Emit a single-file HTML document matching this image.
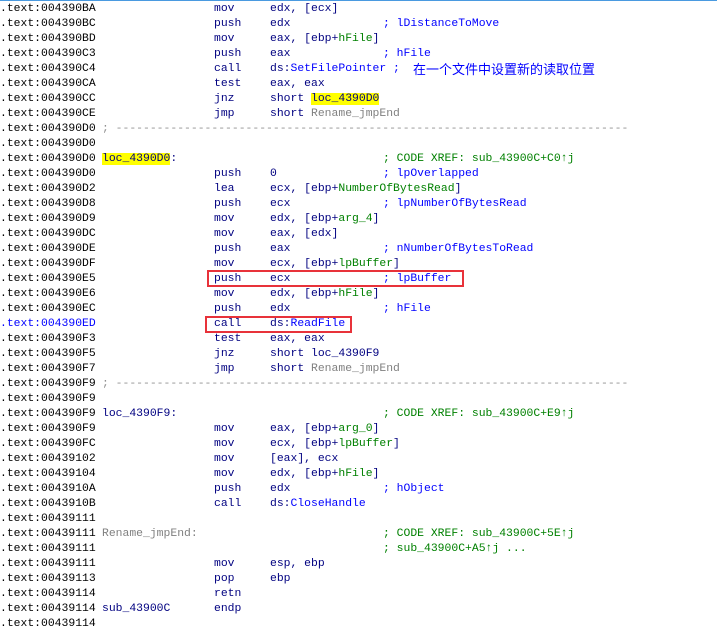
<!DOCTYPE html>
<html><head><meta charset="utf-8"><style>
html,body{margin:0;padding:0;background:#fff;width:717px;height:630px;overflow:hidden;position:relative}
body{font-family:"Liberation Mono",monospace;font-size:11.4px;color:#000080}
.top{position:absolute;left:0;top:0;width:717px;height:1px;background:#4a9ae0}
.l{position:absolute;left:0;height:15px;line-height:15px;width:717px;white-space:pre;margin-top:1px}
.l span{position:absolute;top:0}
.l span span{position:static}
.a{left:0;color:#000}
.b{color:#0000ff}
.lb{left:102px;color:#000080}
.m{left:214px}
.o{left:270px}
.c{left:383px;color:#0000ff}
.g{color:#008000}
.x{left:383px;color:#008000}
.gr{color:#808080}
.y{background:#ffff00}
.sep{left:102px;color:#909090}
.box{position:absolute;border:2px solid #e8323a;box-sizing:border-box}
.l span.cj{left:413px;top:-1px;font-family:"Noto Sans CJK SC",sans-serif;font-size:13px;line-height:15px;color:#0000ff}
</style></head><body>
<div class="top"></div>
<div class="l" style="top:1px"><span class="a">.text:004390BA</span><span class="m">mov</span><span class="o">edx, [ecx]</span></div>
<div class="l" style="top:16px"><span class="a">.text:004390BC</span><span class="m">push</span><span class="o">edx</span><span class="c">; lDistanceToMove</span></div>
<div class="l" style="top:31px"><span class="a">.text:004390BD</span><span class="m">mov</span><span class="o">eax, [ebp+<span class="g">hFile</span>]</span></div>
<div class="l" style="top:46px"><span class="a">.text:004390C3</span><span class="m">push</span><span class="o">eax</span><span class="c">; hFile</span></div>
<div class="l" style="top:61px"><span class="a">.text:004390C4</span><span class="m">call</span><span class="o">ds:<span class="b">SetFilePointer ;</span></span><span class="cj">在一个文件中设置新的读取位置</span></div>
<div class="l" style="top:76px"><span class="a">.text:004390CA</span><span class="m">test</span><span class="o">eax, eax</span></div>
<div class="l" style="top:91px"><span class="a">.text:004390CC</span><span class="m">jnz</span><span class="o">short <span class="y">loc_4390D0</span></span></div>
<div class="l" style="top:106px"><span class="a">.text:004390CE</span><span class="m">jmp</span><span class="o">short <span class="gr">Rename_jmpEnd</span></span></div>
<div class="l" style="top:121px"><span class="a">.text:004390D0</span><span class="sep">; ---------------------------------------------------------------------------</span></div>
<div class="l" style="top:136px"><span class="a">.text:004390D0</span></div>
<div class="l" style="top:151px"><span class="a">.text:004390D0</span><span class="lb"><span class="y">loc_4390D0</span>:</span><span class="x">; CODE XREF: sub_43900C+C0&#8593;j</span></div>
<div class="l" style="top:166px"><span class="a">.text:004390D0</span><span class="m">push</span><span class="o">0</span><span class="c">; lpOverlapped</span></div>
<div class="l" style="top:181px"><span class="a">.text:004390D2</span><span class="m">lea</span><span class="o">ecx, [ebp+<span class="g">NumberOfBytesRead</span>]</span></div>
<div class="l" style="top:196px"><span class="a">.text:004390D8</span><span class="m">push</span><span class="o">ecx</span><span class="c">; lpNumberOfBytesRead</span></div>
<div class="l" style="top:211px"><span class="a">.text:004390D9</span><span class="m">mov</span><span class="o">edx, [ebp+<span class="g">arg_4</span>]</span></div>
<div class="l" style="top:226px"><span class="a">.text:004390DC</span><span class="m">mov</span><span class="o">eax, [edx]</span></div>
<div class="l" style="top:241px"><span class="a">.text:004390DE</span><span class="m">push</span><span class="o">eax</span><span class="c">; nNumberOfBytesToRead</span></div>
<div class="l" style="top:256px"><span class="a">.text:004390DF</span><span class="m">mov</span><span class="o">ecx, [ebp+<span class="g">lpBuffer</span>]</span></div>
<div class="l" style="top:271px"><span class="a">.text:004390E5</span><span class="m">push</span><span class="o">ecx</span><span class="c">; lpBuffer</span></div>
<div class="l" style="top:286px"><span class="a">.text:004390E6</span><span class="m">mov</span><span class="o">edx, [ebp+<span class="g">hFile</span>]</span></div>
<div class="l" style="top:301px"><span class="a">.text:004390EC</span><span class="m">push</span><span class="o">edx</span><span class="c">; hFile</span></div>
<div class="l" style="top:316px"><span class="a b">.text:004390ED</span><span class="m">call</span><span class="o">ds:<span class="b">ReadFile</span></span></div>
<div class="l" style="top:331px"><span class="a">.text:004390F3</span><span class="m">test</span><span class="o">eax, eax</span></div>
<div class="l" style="top:346px"><span class="a">.text:004390F5</span><span class="m">jnz</span><span class="o">short loc_4390F9</span></div>
<div class="l" style="top:361px"><span class="a">.text:004390F7</span><span class="m">jmp</span><span class="o">short <span class="gr">Rename_jmpEnd</span></span></div>
<div class="l" style="top:376px"><span class="a">.text:004390F9</span><span class="sep">; ---------------------------------------------------------------------------</span></div>
<div class="l" style="top:391px"><span class="a">.text:004390F9</span></div>
<div class="l" style="top:406px"><span class="a">.text:004390F9</span><span class="lb">loc_4390F9:</span><span class="x">; CODE XREF: sub_43900C+E9&#8593;j</span></div>
<div class="l" style="top:421px"><span class="a">.text:004390F9</span><span class="m">mov</span><span class="o">eax, [ebp+<span class="g">arg_0</span>]</span></div>
<div class="l" style="top:436px"><span class="a">.text:004390FC</span><span class="m">mov</span><span class="o">ecx, [ebp+<span class="g">lpBuffer</span>]</span></div>
<div class="l" style="top:451px"><span class="a">.text:00439102</span><span class="m">mov</span><span class="o">[eax], ecx</span></div>
<div class="l" style="top:466px"><span class="a">.text:00439104</span><span class="m">mov</span><span class="o">edx, [ebp+<span class="g">hFile</span>]</span></div>
<div class="l" style="top:481px"><span class="a">.text:0043910A</span><span class="m">push</span><span class="o">edx</span><span class="c">; hObject</span></div>
<div class="l" style="top:496px"><span class="a">.text:0043910B</span><span class="m">call</span><span class="o">ds:<span class="b">CloseHandle</span></span></div>
<div class="l" style="top:511px"><span class="a">.text:00439111</span></div>
<div class="l" style="top:526px"><span class="a">.text:00439111</span><span class="lb gr">Rename_jmpEnd:</span><span class="x">; CODE XREF: sub_43900C+5E&#8593;j</span></div>
<div class="l" style="top:541px"><span class="a">.text:00439111</span><span class="x">; sub_43900C+A5&#8593;j ...</span></div>
<div class="l" style="top:556px"><span class="a">.text:00439111</span><span class="m">mov</span><span class="o">esp, ebp</span></div>
<div class="l" style="top:571px"><span class="a">.text:00439113</span><span class="m">pop</span><span class="o">ebp</span></div>
<div class="l" style="top:586px"><span class="a">.text:00439114</span><span class="m">retn</span></div>
<div class="l" style="top:601px"><span class="a">.text:00439114</span><span class="lb b">sub_43900C</span><span class="m">endp</span></div>
<div class="l" style="top:616px"><span class="a">.text:00439114</span></div>
<div class="box" style="left:207px;top:270px;width:257px;height:17px"></div>
<div class="box" style="left:205px;top:316px;width:147px;height:17px"></div>
</body></html>
